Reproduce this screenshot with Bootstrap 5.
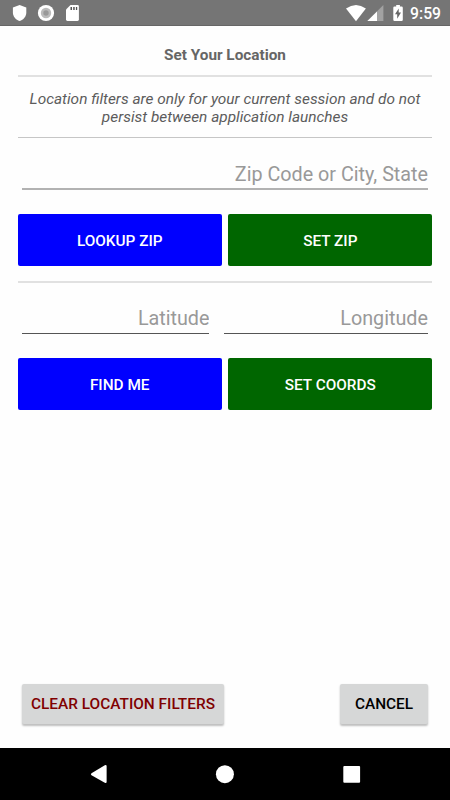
<!DOCTYPE html>
<html lang="en">
<head>
<meta charset="utf-8">
<meta name="viewport" content="width=device-width, initial-scale=1">
<title>Set Your Location</title>
<link href="https://cdn.jsdelivr.net/npm/bootstrap@5.3.0/dist/css/bootstrap.min.css" rel="stylesheet">
<style>
body{font-family:Roboto,"Liberation Sans",sans-serif;font-size:15.35px;line-height:18px;background:#fefefe;color:#555}
.screen{height:800px;width:450px}
.statusbar{height:26px;background:#757575;border-bottom:1px solid #666;padding-left:12px;padding-right:9px}
.clock{font-size:15.7px;font-weight:500;line-height:26px;padding-top:2px}
.main{padding:0 17.7px}
.title{height:49px;padding-top:20px;font-size:15.32px;line-height:18px;font-weight:700;color:#666}
.rule{height:2px;background:#e1e1e1}
.rule-thin{height:1px;background:#c6c6c6}
.note{height:60px;padding-top:13px;color:#5c5c5c;font-size:15.4px;margin:0 -4px}
.fields{padding:0 4.3px}
.field{border:0;border-radius:0;background:transparent;padding:0;font-size:19.75px;line-height:24px;text-align:right;color:#555}
.field::placeholder{color:#999;opacity:1}
.field-zip{height:52px;padding-top:22px;border-bottom:2px solid #b2b2b2}
.field-coord{height:51px;padding-top:21px;border-bottom:1px solid #555}
.coords{gap:15px}
.lat{width:187.5px}
.lng{width:203.500px}
.pair{gap:6.5px}
.zip-actions{padding:23.5px 0 15px}
.coord-actions{padding-top:24px}
.action{height:52.5px;border:0;border-radius:2px;font-weight:500;font-size:15.35px;color:#fff;padding:3px 0 0}
.coord-actions .action{height:52px}
.action:hover{color:#fff}
.blue,.blue:hover{background:#00f}
.green,.green:hover{background:#060}
.raised{height:40px;border:0;border-radius:2px;background:#d6d7d7;font-size:15.4px;font-weight:500;padding:2px 0 0;box-shadow:0 1.5px 2px rgba(0,0,0,.25)}
.clear{width:202px;color:#800000}
.cancel{width:88px;color:#000}
.bottom-actions{padding:0 4.3px 23.5px}
.navbuttons{height:52.5px;background:#000}
svg{display:block}
</style>
</head>
<body>
<div class="screen d-flex flex-column overflow-hidden">
  <header class="statusbar d-flex align-items-center justify-content-between text-white flex-shrink-0">
    <svg width="70" height="18" viewBox="12 4 70 18" fill="#fff">
      <path d="M19.600 5 26.300 7.500v5c0 4-2.900 7.400-6.700 8.600-3.800-1.200-6.700-4.600-6.700-8.600v-5z"/>
      <circle cx="46" cy="13" r="8.100"/><circle cx="46" cy="13" r="5.200" fill="#bbb"/><circle cx="46" cy="13" r="2.700" fill="#999"/>
      <path d="M70.500 5h7q1.400 0 1.400 1.400v13.200q0 1.400-1.400 1.400h-10.100q-1.400 0-1.400-1.400V9.500z"/>
      <path fill="#555" d="M70.500 7h1.500v3h-1.500zM73.200 7h1.500v3h-1.500zM75.900 7h1.300v3h-1.300z"/>
    </svg>
    <div class="d-flex align-items-center">
      <svg width="65" height="18" viewBox="345.300 4 65 18" fill="#fff">
        <path d="M346.300 8.500Q356.300 1.500 366.200 8.500L356.300 21.200z"/>
        <path fill="#a2a2a2" d="M383.700 5v16h-16z"/><path d="M377.300 11.400V21H367.700z"/>
        <path d="M394.800 6.500h1.700V5h3.700v1.500h1.700q1.200 0 1.200 1.200v12.100q0 1.200-1.200 1.200h-7.100q-1.200 0-1.200-1.200V7.700q0-1.200 1.200-1.200z"/>
        <path fill="#666" d="M399 8.600v4h2.300l-3.800 6.100v-4.400h-2.200z"/>
      </svg>
      <span class="clock">9:59</span>
    </div>
  </header>
  <main class="main d-flex flex-column flex-grow-1">
    <h1 class="title text-center m-0">Set Your Location</h1>
    <div class="rule"></div>
    <p class="note fst-italic text-center">Location filters are only for your current session and do not<br>persist between application launches</p>
    <div class="rule-thin"></div>
    <div class="fields"><input class="field field-zip w-100 d-block" type="text" placeholder="Zip Code or City, State" aria-label="Zip Code or City, State"></div>
    <div class="d-flex pair zip-actions">
      <button class="btn action blue flex-fill w-50" type="button">LOOKUP ZIP</button>
      <button class="btn action green flex-fill w-50" type="button">SET ZIP</button>
    </div>
    <div class="rule"></div>
    <div class="fields d-flex coords">
      <input class="field field-coord lat" type="text" placeholder="Latitude" aria-label="Latitude">
      <input class="field field-coord lng" type="text" placeholder="Longitude" aria-label="Longitude">
    </div>
    <div class="d-flex pair coord-actions">
      <button class="btn action blue flex-fill w-50" type="button">FIND ME</button>
      <button class="btn action green flex-fill w-50" type="button">SET COORDS</button>
    </div>
    <div class="bottom-actions d-flex justify-content-between mt-auto">
      <button class="btn raised clear" type="button">CLEAR LOCATION FILTERS</button>
      <button class="btn raised cancel" type="button">CANCEL</button>
    </div>
  </main>
  <nav class="navbuttons flex-shrink-0" aria-label="System navigation">
    <svg width="450" height="52" viewBox="0 747.500 450 52" fill="#fff">
      <path d="M91.500 772.800 104.800 764.700q1.800-.9 1.800.8v16q0 1.700-1.800.8L91.500 774.700q-1.300-.95 0-1.900z"/>
      <circle cx="224.900" cy="773.700" r="9"/>
      <rect x="343.300" y="765.500" width="16.800" height="16.800" rx="1"/>
    </svg>
  </nav>
</div>
<script src="https://cdn.jsdelivr.net/npm/bootstrap@5.3.0/dist/js/bootstrap.bundle.min.js"></script>
</body>
</html>
